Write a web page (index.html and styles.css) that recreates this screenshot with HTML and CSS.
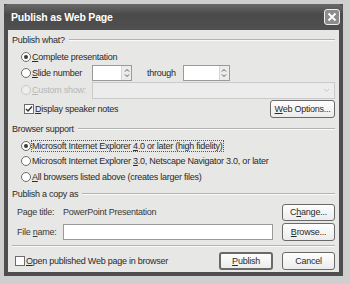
FILE: index.html
```html
<!DOCTYPE html>
<html lang="en">
<head>
    <meta charset="UTF-8">
    <title>Publish as Web Page</title>
    <link rel="stylesheet" href="styles.css">
</head>
<body>
    <div class="window">
        <div class="titlebar">
            <span class="title">Publish as Web Page</span>
            <span class="close">
                <svg width="10" height="10" viewBox="0 0 10 10"><path d="M1.5 1.5 L8.5 8.5 M8.5 1.5 L1.5 8.5" stroke="#fff" stroke-width="1.8" fill="none"/></svg>
            </span>
        </div>

        <div class="content">
            <div class="group-head h1"><span>Publish what?</span><i class="rule"></i></div>

            <div class="row r-complete">
                <label class="radio"><span class="dot on"></span><span><u>C</u>omplete presentation</span></label>
            </div>

            <div class="row r-slide">
                <label class="radio opt"><span class="dot"></span><span><u>S</u>lide number</span></label>
                <div class="spin">
                    <span class="arrows">
                        <svg width="6" height="10" viewBox="0 0 6 10"><path d="M1 3.5 L3 1.5 L5 3.5 M1 6.5 L3 8.5 L5 6.5" stroke="#555" stroke-width="1" fill="none"/></svg>
                    </span>
                </div>
                <span class="through">through</span>
                <div class="spin wide">
                    <span class="arrows">
                        <svg width="6" height="10" viewBox="0 0 6 10"><path d="M1 3.5 L3 1.5 L5 3.5 M1 6.5 L3 8.5 L5 6.5" stroke="#555" stroke-width="1" fill="none"/></svg>
                    </span>
                </div>
            </div>

            <div class="row r-custom disabled">
                <label class="radio opt"><span class="dot"></span><span><u>C</u>ustom show:</span></label>
                <div class="combo">
                    <svg width="7" height="5" viewBox="0 0 7 5"><path d="M1 1 L3.5 3.5 L6 1" stroke="#c4c4c4" stroke-width="1" fill="none"/></svg>
                </div>
            </div>

            <div class="row r-notes">
                <label class="check"><span class="box"><svg width="8" height="8" viewBox="0 0 8 8"><path d="M1 4 L3 6 L7 1.5" stroke="#333" stroke-width="1.4" fill="none"/></svg></span><span><u>D</u>isplay speaker notes</span></label>
                <button class="btn b-web"><u>W</u>eb Options...</button>
            </div>

            <div class="group-head h2"><span>Browser support</span><i class="rule"></i></div>

            <div class="row r-b1">
                <label class="radio"><span class="dot on"></span><span class="focus">Microsoft Internet Explorer <u>4</u>.0 or later (high fidelity)</span></label>
            </div>
            <div class="row r-b2">
                <label class="radio"><span class="dot"></span><span>Microsoft Internet Explorer <u>3</u>.0, Netscape Navigator 3.0, or later</span></label>
            </div>
            <div class="row r-b3">
                <label class="radio"><span class="dot"></span><span><u>A</u>ll browsers listed above (creates larger files)</span></label>
            </div>

            <div class="group-head h3"><span>Publish a copy as</span><i class="rule"></i></div>

            <div class="row r-title">
                <span class="field-label">Page title:</span>
                <span class="field-value">PowerPoint Presentation</span>
                <button class="btn b-side">C<u>h</u>ange...</button>
            </div>
            <div class="row r-file">
                <span class="field-label">File <u>n</u>ame:</span>
                <div class="textbox"></div>
                <button class="btn b-side"><u>B</u>rowse...</button>
            </div>

            <div class="sep"><i class="rule"></i></div>

            <div class="row r-bottom">
                <label class="check"><span class="box"></span><span><u>O</u>pen published Web page in browser</span></label>
                <button class="btn b-default"><u>P</u>ublish</button>
                <button class="btn b-side">Cancel</button>
            </div>
        </div>
    </div>
</body>
</html>
```

FILE: styles.css
```css
body { margin: 0; background: #cfcfcf; width: 350px; height: 284px; overflow: hidden; }
.window {
    margin: 4px 0 0 4px;
    width: 339px;
    height: 272px;
    background: #4e4e4e;
    box-sizing: border-box;
    padding: 0 4px 4px 4px;
    display: flex;
    flex-direction: column;
    font-family: "Liberation Sans", Arial, sans-serif;
    font-size: 9px;
    letter-spacing: -0.25px;
    color: #2a2a2a;
}
.titlebar {
    height: 26px;
    display: flex;
    align-items: center;
    justify-content: space-between;
    margin: 0 -4px;
    padding: 0 3px 0 7px;
    background: linear-gradient(#6a6a6a, #4a4a4a 40%, #505050);
    border-radius: 5px 5px 0 0;
}
.title { color: #fff; font-weight: bold; font-size: 10.5px; letter-spacing: -0.2px; }
.close {
    width: 16px;
    height: 16px;
    box-sizing: border-box;
    border: 1px solid #eee;
    border-radius: 3px;
    background: #8c8c8c;
    display: flex;
    align-items: center;
    justify-content: center;
}
.content {
    flex: 1;
    background: #e7e7e5;
    padding: 0 4px;
    display: flex;
    flex-direction: column;
}
u { text-decoration: underline; text-underline-offset: 1px; }

.group-head { display: flex; align-items: center; gap: 4px; height: 19px; }
.rule { flex: 1; height: 0; border-top: 1px solid #b3b3b3; border-bottom: 1px solid #fafafa; }
.sep { height: 6px; display: flex; align-items: center; }

.row { display: flex; align-items: center; }
.r-complete { height: 15px; }
.r-slide { height: 17px; }
.r-custom { height: 18px; }
.r-notes { height: 20px; }
.r-b1 { height: 15px; }
.r-b2 { height: 16px; }
.r-b3 { height: 15px; }
.r-title { height: 18px; }
.r-file { height: 22px; }
.r-bottom { height: 23px; }

.radio, .check { display: flex; align-items: center; white-space: nowrap; }
.radio { margin-left: 9px; }
.radio.opt { width: 71px; }
.dot {
    width: 10px;
    height: 10px;
    box-sizing: border-box;
    border: 1px solid #6d6d6d;
    border-radius: 50%;
    background: #fdfdfd;
    margin-right: 1px;
    display: flex;
    align-items: center;
    justify-content: center;
}
.dot.on::after { content: ""; width: 4px; height: 4px; border-radius: 50%; background: #3a3a3a; }
.check { margin-left: 12px; }
.box {
    width: 10px;
    height: 10px;
    box-sizing: border-box;
    border: 1px solid #6d6d6d;
    background: #fdfdfd;
    margin-right: 1px;
    display: flex;
    align-items: center;
    justify-content: center;
}
.r-bottom .check { margin-left: 3px; }
.focus { outline: 1px dotted #555; }

.disabled { color: #b8b8b8; }
.disabled .dot { border-color: #c8c8c8; background: #eee; }

.spin {
    width: 40px;
    height: 16px;
    box-sizing: border-box;
    border: 1px solid #9a9a9a;
    background: #fff;
    display: flex;
    justify-content: flex-end;
}
.spin.wide { width: 47px; }
.arrows {
    width: 9px;
    background: #ececec;
    border-left: 1px solid #d6d6d6;
    display: flex;
    align-items: center;
    justify-content: center;
}
.through { margin: 0 7px 0 15px; }
.combo {
    flex: 1;
    height: 17px;
    box-sizing: border-box;
    border: 1px solid #cacaca;
    background: #ececec;
    display: flex;
    justify-content: flex-end;
    align-items: center;
    padding-right: 4px;
}

.btn {
    font: inherit;
    letter-spacing: inherit;
    color: #2a2a2a;
    height: 18px;
    box-sizing: border-box;
    border: 1px solid #6a6a6a;
    border-radius: 3px;
    background: linear-gradient(#fefefe, #ececec);
    padding: 0;
}
.b-web { margin-left: auto; width: 65px; }
.b-side { width: 53px; margin-left: 9px; }
.r-title .b-side { margin-left: auto; height: 17px; }
.b-default { margin-left: auto; width: 54px; border: 2px solid #6a6a6a; }

.field-label { margin-left: 5px; width: 46px; color: #3a3a3a; }
.field-value { color: #3a3a3a; }
.textbox {
    width: 210px;
    height: 16px;
    box-sizing: border-box;
    border: 1px solid #9a9a9a;
    background: #fff;
}
```
